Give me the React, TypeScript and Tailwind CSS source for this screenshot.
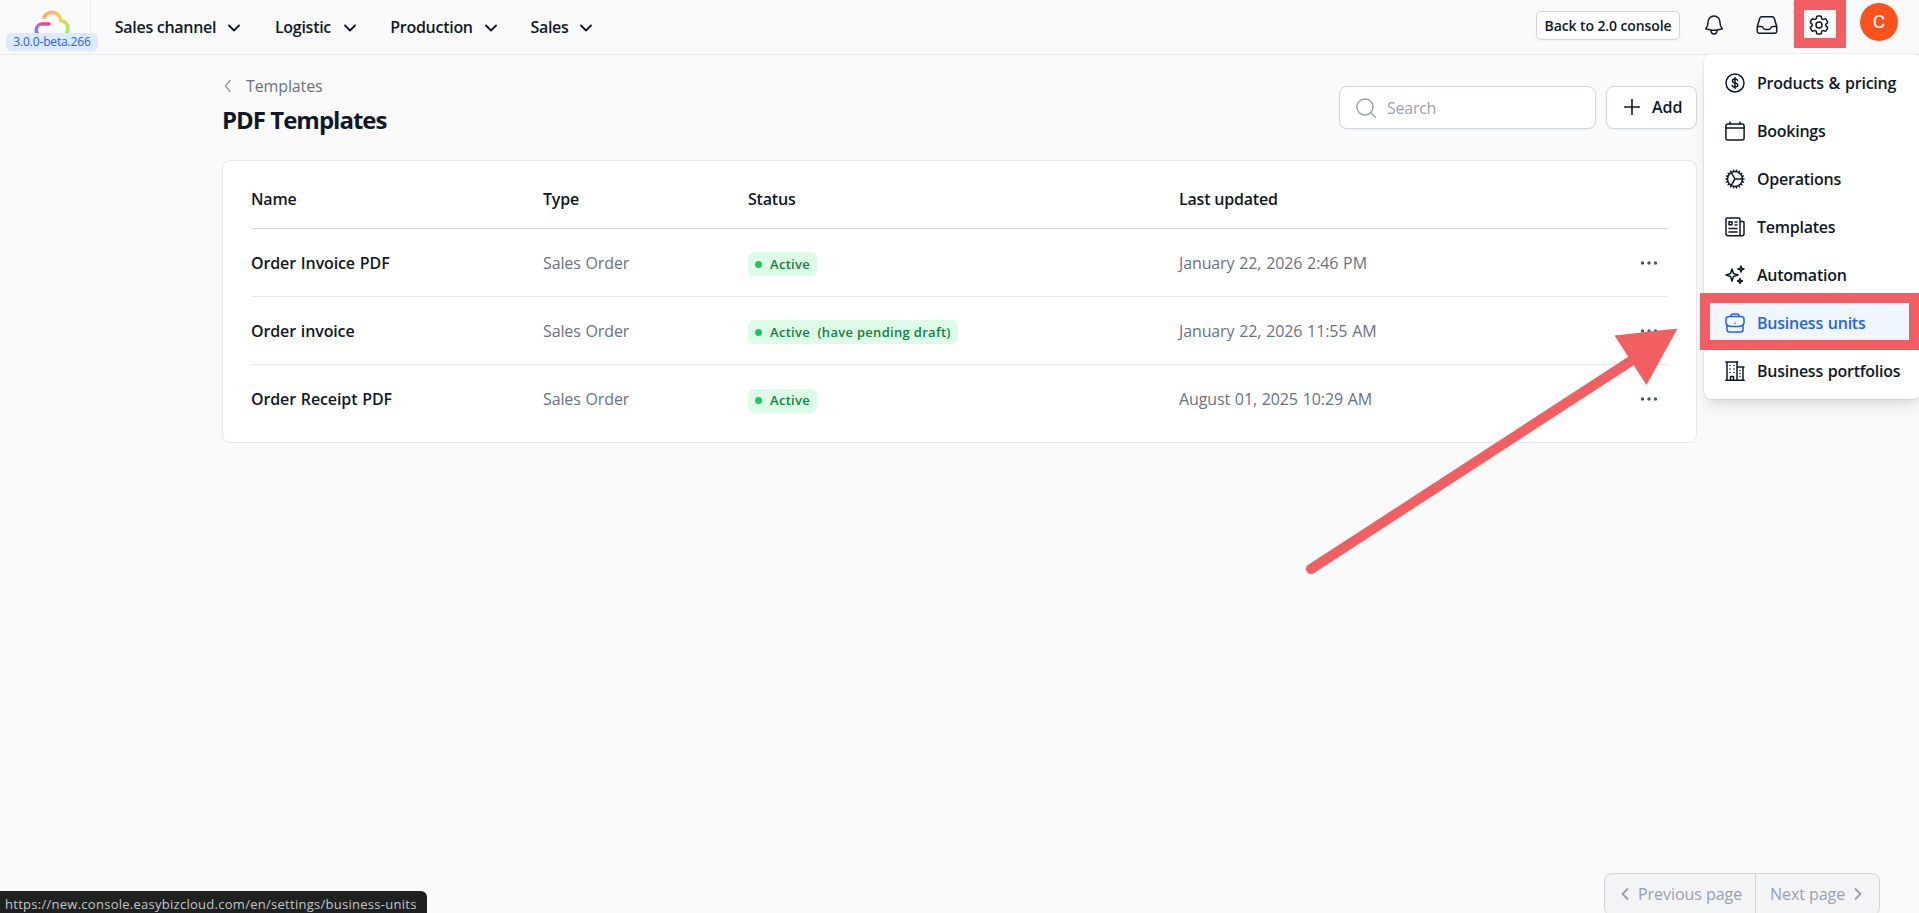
import { HiOutlineBell, HiOutlineCog, HiOutlineCog6Tooth, HiOutlineInbox } from 'react-icons/hi2';
import type { ReactNode } from 'react';

const navItems = [
  { label: 'Sales channel', width: 'w-[103px]' },
  { label: 'Logistic', width: 'w-[60px]' },
  { label: 'Production', width: 'w-[85px]' },
  { label: 'Sales', width: 'w-[39px]' },
];

const rows = [
  { name: 'Order Invoice PDF', type: 'Sales Order', pending: false, updated: 'January 22, 2026 2:46 PM' },
  { name: 'Order invoice', type: 'Sales Order', pending: true, updated: 'January 22, 2026 11:55 AM' },
  { name: 'Order Receipt PDF', type: 'Sales Order', pending: false, updated: 'August 01, 2025 10:29 AM' },
];

const Chevron = ({ d, className }: { d: string; className: string }) => (
  <svg viewBox="0 0 12 12" fill="none" stroke="currentColor" strokeLinecap="round" strokeLinejoin="round" className={className}>
    <path d={d} />
  </svg>
);

const Icon = ({ children }: { children: ReactNode }) => (
  <svg
    viewBox="0 0 20 20"
    fill="none"
    stroke="currentColor"
    strokeWidth="1.5"
    strokeLinecap="round"
    strokeLinejoin="round"
    className="size-5 shrink-0"
  >
    {children}
  </svg>
);

const menuItems = [
  {
    label: 'Products & pricing',
    icon: (
      <Icon>
        <circle cx="10" cy="10" r="9" />
        <path d="M12.6 7.4C12.3 6.4 11.3 6 10 6c-1.500 0-2.600.7-2.600 1.900 0 2.800 5.400 1.400 5.400 4.200 0 1.200-1.200 2-2.800 2-1.500 0-2.600-.6-2.800-1.700M10 4.500v11" />
      </Icon>
    ),
  },
  {
    label: 'Bookings',
    icon: (
      <Icon>
        <rect x=".9" y="3" width="18.200" height="16" rx="2" />
        <path d="M1 7h18M5 1v2M15 1v2" />
      </Icon>
    ),
  },
  { label: 'Operations', icon: <HiOutlineCog className="size-6 -m-0.5 shrink-0" /> },
  {
    label: 'Templates',
    icon: (
      <Icon>
        <path d="M15 18.500V2.200c0-.7-.4-1.200-1.100-1.200H2.100C1.400 1 1 1.500 1 2.200v14.600c0 1.200.8 2 2 2h14c1.200 0 2-.8 2-2V5.500c0-.6-.4-1-1-1h-3" />
        <path d="M4 4.800h3v3H4zM10 5h2M10 8h2M4 11.500h8M4 15h8" />
      </Icon>
    ),
  },
  {
    label: 'Automation',
    icon: (
      <Icon>
        <path d="M7 4l1.500 4.500L13 10l-4.500 1.500L7 16l-1.500-4.500L1 10l4.500-1.500z" />
        <path d="M16 1l.8 2.200L19 4l-2.200.8L16 7l-.8-2.200L13 4l2.200-.8zM15 13.500l.7 1.800 1.800.7-1.800.7-.7 1.800-.7-1.800-1.800-.7 1.800-.7z" />
      </Icon>
    ),
  },
  {
    label: 'Business units',
    active: true,
    icon: (
      <Icon>
        <path d="M4 3.500h12c1.800 0 3 1.200 3 3v3c0 2-1.200 3.200-3 3.500-4 .8-8 .8-12 0-1.800-.3-3-1.500-3-3.500v-3c0-1.800 1.200-3 3-3z" />
        <path d="M6 3.500V3c0-1.200.8-2 2-2h4c1.200 0 2 .8 2 2v.5M2 12.500v4C2 18 3 19 4.500 19h11c1.500 0 2.500-1 2.500-2.500v-4M10 10.300v.1" />
      </Icon>
    ),
  },
  {
    label: 'Business portfolios',
    icon: (
      <Icon>
        <path d="M.8 19.200h18.400M2 19V1M.8 1h12M12 1v18M12 6h7M18 6v13M5.500 19v-3.500h3V19" />
        <path d="M5 4.500h.1M9 4.500h.1M5 8h.1M9 8h.1M5 11.500h.1M9 11.500h.1M15 9.500h.1M15 12.500h.1M15 15.500h.1" />
      </Icon>
    ),
  },
];

const StatusBadge = ({ pending }: { pending: boolean }) => (
  <span className="inline-flex h-6 items-center gap-2 rounded-md bg-[#dcfce7] px-[7px] text-[13px] font-semibold tracking-[0.3px] whitespace-pre text-[#15803d] [word-spacing:0]">
    <span className="size-[7px] rounded-full bg-[#22c55e]" />
    <span>{pending ? 'Active  (have pending draft)' : 'Active'}</span>
  </span>
);

const Header = () => (
  <header className="flex h-[55px] border-b border-gray-200 text-gray-900">
    <div className="relative w-[91px] shrink-0 border-r border-gray-200">
      <svg viewBox="0 0 36 28" fill="none" strokeWidth="3.500" strokeLinecap="round" className="mt-[10px] ml-[34px] h-7 w-9">
        <defs>
          <linearGradient id="cloudTop" x1="8" y1="0" x2="36" y2="26" gradientUnits="userSpaceOnUse">
            <stop stopColor="#ff9472" />
            <stop offset=".45" stopColor="#fdcf4c" />
            <stop offset="1" stopColor="#7dfa65" />
          </linearGradient>
          <linearGradient id="cloudLeft" x1="2" y1="26" x2="16" y2="14" gradientUnits="userSpaceOnUse">
            <stop stopColor="#4c8dff" />
            <stop offset=".5" stopColor="#bd68c8" />
            <stop offset="1" stopColor="#ff3d71" />
          </linearGradient>
        </defs>
        <path stroke="url(#cloudTop)" d="M10 7.500C13 1 22 1 25.500 6.500c.8 1.300 1 2.500 1.200 4C31 11 34 14 34 18.500c0 3-1.500 5.500-4 7" />
        <path stroke="url(#cloudLeft)" d="M15 14H8.500C4.500 14 2.200 17 2.200 20c0 2.500 1 4 2.800 5.500" />
      </svg>
      <span className="absolute top-[33px] left-[6px] flex h-[18px] w-[92px] items-center justify-center rounded-md bg-blue-100 text-xs font-medium tracking-[-0.15px] text-[#2563eb]">
        3.0.0-beta.266
      </span>
    </div>

    <nav className="flex h-[54px] items-center gap-[33px] pl-[23px]">
      {navItems.map((item) => (
        <button key={item.label} className="flex items-center gap-[11px] text-base font-semibold tracking-[-0.28px] whitespace-nowrap">
          <span className={item.width}>{item.label}</span>
          <Chevron d="M1 3.500l5 5 5-5" className="mt-0.5 size-3 stroke-[1.800]" />
        </button>
      ))}
    </nav>

    <div className="ml-auto flex h-[54px] items-start">
      <button className="mt-[11px] flex h-[29px] w-36 items-center justify-center rounded-[5px] border border-gray-300 bg-white text-sm font-semibold tracking-[-0.1px] whitespace-nowrap shadow-xs">
        Back to 2.0 console
      </button>
      <HiOutlineBell className="mt-[13px] ml-[22px] size-6" />
      <HiOutlineInbox className="mt-[13px] ml-[29px] size-6" />
      <div className="ml-[15px] flex h-12 w-[52px] items-center justify-center border-[10px] border-[#f25f63]">
        <HiOutlineCog6Tooth className="mt-0.5 mr-0.5 size-6 shrink-0" />
      </div>
      <span className="mt-[3px] mr-[21px] ml-[14px] flex size-[38px] items-center justify-center rounded-full bg-[#f9521d] font-['Roboto',sans-serif] text-[19px] text-white">
        C
      </span>
    </div>
  </header>
);

const SettingsMenu = () => (
  <div className="absolute top-[54px] left-[1704px] h-[345px] w-[217px] rounded-lg bg-white pt-[5px] shadow-lg ring-1 ring-gray-900/5">
    {menuItems.map((item) => (
      <div
        key={item.label}
        className={`flex h-12 items-center gap-3 pl-[21px] text-base font-semibold tracking-[-0.25px] whitespace-nowrap [word-spacing:1px] ${
          item.active ? 'bg-[#eff6ff] text-[#2563eb]' : 'text-gray-900'
        }`}
      >
        {item.icon}
        {item.label}
      </div>
    ))}
    {/* highlight around the active entry */}
    <div className="absolute top-[239px] left-[-4px] h-[57px] w-[219px] border-[10px] border-[#f25f63]" />
  </div>
);

const TemplatesTable = () => (
  <div className="mt-[22px] h-[283px] rounded-lg border border-gray-200 bg-white px-7 pt-2">
    <table className="w-full table-fixed text-left text-base">
      <colgroup>
        <col className="w-[292px]" />
        <col className="w-[205px]" />
        <col className="w-[431px]" />
        <col />
        <col className="w-[60px]" />
      </colgroup>
      <thead>
        <tr className="h-[59px] border-b border-gray-300 tracking-[-0.2px] text-gray-900">
          <th className="pt-px font-semibold">Name</th>
          <th className="pt-px font-semibold">Type</th>
          <th className="pt-px font-semibold">Status</th>
          <th className="pt-px font-semibold">Last updated</th>
          <th />
        </tr>
      </thead>
      <tbody>
        {rows.map((row) => (
          <tr
            key={row.name}
            className="h-[68px] border-b border-gray-200 tracking-[-0.12px] text-gray-500 [word-spacing:0.8px] last:border-b-0"
          >
            <td className="pt-0.5 font-semibold text-gray-900">{row.name}</td>
            <td className="pt-0.5">{row.type}</td>
            <td className="pt-0.5">
              <StatusBadge pending={row.pending} />
            </td>
            <td className="pt-0.5">{row.updated}</td>
            <td className="pt-0.5">
              <svg viewBox="0 0 18 4" fill="currentColor" className="ml-auto mr-2.5 h-1 w-[18px] text-gray-600">
                <circle cx="2.500" cy="2" r="1.700" />
                <circle cx="9" cy="2" r="1.700" />
                <circle cx="15.500" cy="2" r="1.700" />
              </svg>
            </td>
          </tr>
        ))}
      </tbody>
    </table>
  </div>
);

const App = () => {
  return (
    <div className="relative flex h-[913px] w-[1919px] flex-col overflow-hidden bg-[#fafafa] font-['Open_Sans','Noto_Sans',sans-serif]">
      <Header />

      <main className="ml-[222px] w-[1475px]">
        <div className="flex justify-between">
          <div className="pt-[19px]">
            <div className="flex h-6 items-center gap-3 text-base font-medium tracking-[-0.12px] text-gray-500">
              <Chevron d="M8 .5L3.500 6 8 11.500" className="size-3 stroke-[1.600] text-gray-400" />
              Templates
            </div>
            <h1 className="mt-1 text-2xl leading-9 font-bold tracking-[-1px] text-gray-900">PDF Templates</h1>
          </div>
          <div className="mt-[31px] flex gap-2.5">
            <div className="flex h-[43px] w-[257px] items-center gap-[11px] rounded-lg border border-gray-300 bg-white pl-4 text-base tracking-[-0.25px] text-gray-400 shadow-xs">
              <Icon>
                <circle cx="9" cy="9" r="8" />
                <path d="M15 15l4.300 4.300" />
              </Icon>
              Search
            </div>
            <button className="flex h-[43px] w-[91px] items-center gap-3 rounded-lg border border-gray-300 bg-white pb-0.5 pl-[17px] text-base font-semibold text-gray-900 shadow-xs">
              <svg viewBox="0 0 16 16" stroke="currentColor" strokeWidth="1.600" className="size-4">
                <path d="M8 0v16M0 8h16" />
              </svg>
              Add
            </button>
          </div>
        </div>
        <TemplatesTable />
      </main>

      <footer className="mt-auto flex h-10 shrink-0 items-start justify-between">
        <div className="mt-[18px] h-[22px] w-[427px] rounded-tr-md bg-[#1f2020] pt-1 pl-[5px] text-[13px] leading-[18px] tracking-[0.27px] whitespace-nowrap text-[#c4c7c9]">
          https://new.console.easybizcloud.com/en/settings/business-units
        </div>
        <div className="mr-[39px] flex h-[43px] rounded-lg border border-gray-300 bg-gray-100 text-base tracking-[-0.05px] text-gray-400">
          <button className="flex w-[151px] items-center gap-[7px] border-r border-gray-300 pb-0.5 pl-[14px] font-medium whitespace-nowrap">
            <Chevron d="M8.500 1L3.500 6l5 5" className="size-3 shrink-0 stroke-[1.800]" />
            Previous page
          </button>
          <button className="flex w-[123px] items-center gap-[7px] pb-0.5 pl-[14px] font-medium whitespace-nowrap">
            Next page
            <Chevron d="M3.500 1l5 5-5 5" className="size-3 shrink-0 stroke-[1.800]" />
          </button>
        </div>
      </footer>

      <SettingsMenu />

      {/* arrow pointing at the active menu entry */}
      <svg viewBox="0 0 380 260" className="pointer-events-none absolute top-[320px] left-[1300px] h-[260px] w-[380px]">
        <path d="M11 249L334 39" stroke="#f25f63" strokeWidth="10" strokeLinecap="round" />
        <path d="M377.500 8.500L314.500 15.500L346.500 65z" fill="#f25f63" />
      </svg>
    </div>
  );
};

export default App;
